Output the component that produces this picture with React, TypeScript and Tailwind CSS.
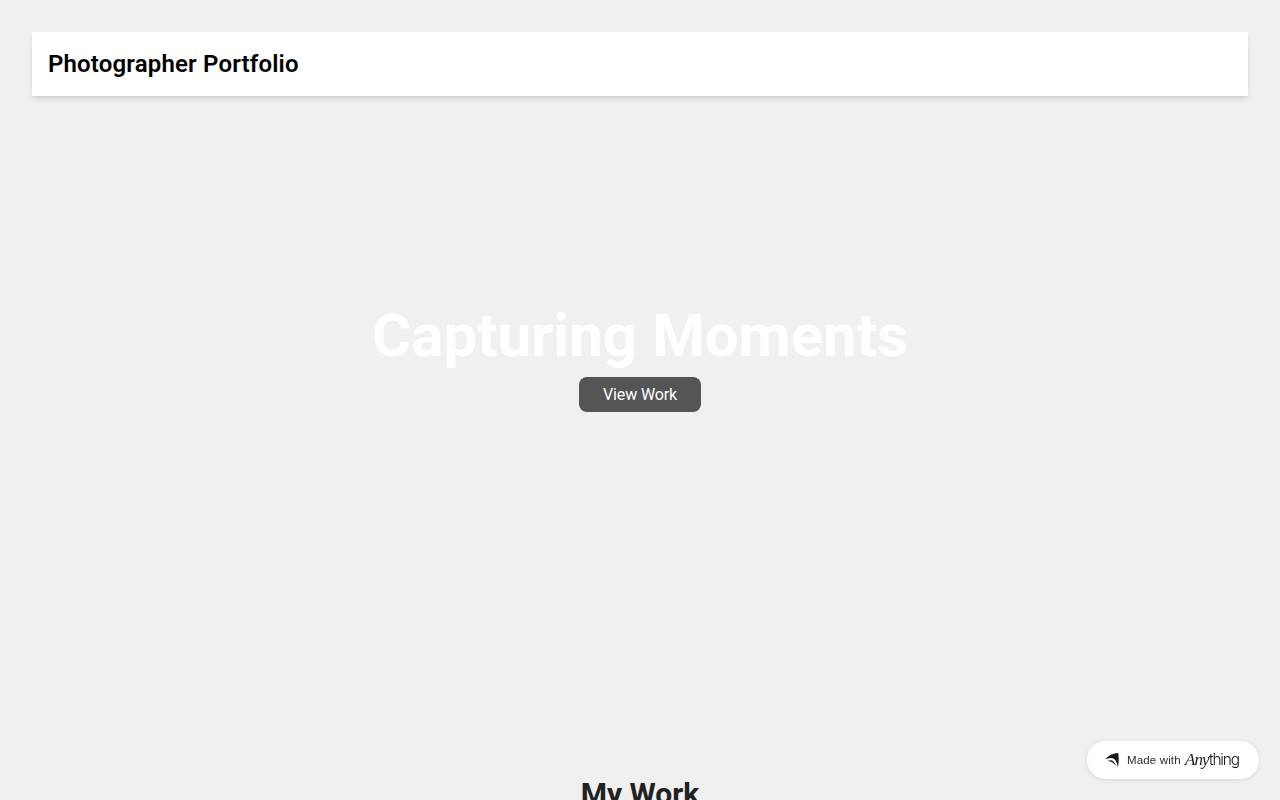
const BadgeIcon = () => (
	<svg width="14" height="16" viewBox="0 0 14 16" fill="#18191c">
		<path d="M0.2 7.4C2.4 4.8 5.4 1.6 13.2 1C14 6 14 10.4 12.8 15.2C12.4 11 10.2 5.6 5.4 6C3.4 6.2 1.8 6.7 0.2 7.4Z" />
		<path d="M2.6 9C6.2 7 9.8 8.8 11 14C8.8 11 6.6 9.4 2.6 9Z" />
	</svg>
);

function Header() {
	return (
		<header className="flex h-16 shrink-0 items-center bg-white px-4 shadow-[0_4px_6px_-1px_rgba(0,0,0,0.1),0_2px_4px_-1px_rgba(0,0,0,0.06)]">
			<h1 className="text-2xl font-semibold tracking-[0.16px] text-black">
				Photographer Portfolio
			</h1>
		</header>
	);
}

function Hero() {
	return (
		<section className="flex h-[680px] shrink-0 flex-col items-center pt-[210px] text-center text-white">
			<h2 className="text-6xl font-bold tracking-[0.04px]">Capturing Moments</h2>
			<a
				href="#work"
				className="mt-[11px] flex h-[35px] w-[122px] items-center justify-center rounded-lg bg-[#555] text-base tracking-[-0.15px]"
			>
				View Work
			</a>
		</section>
	);
}

function MadeWithBadge() {
	return (
		<a
			href="#"
			className="fixed right-[21px] bottom-[21px] flex h-[38px] w-[172px] items-center rounded-full bg-white pl-[18px] shadow-[0_1px_5px_rgba(0,0,0,0.1)]"
		>
			<BadgeIcon />
			<span className="ml-2 w-[54px] pt-px font-['Liberation_Sans',sans-serif] text-[11.5px] tracking-[0.15px] whitespace-nowrap text-[#2b2b33]">
				Made with
			</span>
			<span className="ml-1 flex items-baseline text-[#18191c]">
				<span className="w-[24px] font-['Liberation_Serif',serif] text-[17px] tracking-[-0.9px] italic">
					Any
				</span>
				<span className="font-[Inter,sans-serif] text-[15.5px] font-[350] tracking-[-1.2px]">
					thing
				</span>
			</span>
		</a>
	);
}

export default function App() {
	return (
		<div className="flex h-screen flex-col overflow-hidden bg-[#f0f0f0] p-8 pb-0 font-[Roboto,sans-serif]">
			<Header />
			<Hero />
			<section id="work" className="shrink-0">
				<h2 className="text-center text-3xl font-bold text-[#222]">My Work</h2>
			</section>
			<MadeWithBadge />
		</div>
	);
}
